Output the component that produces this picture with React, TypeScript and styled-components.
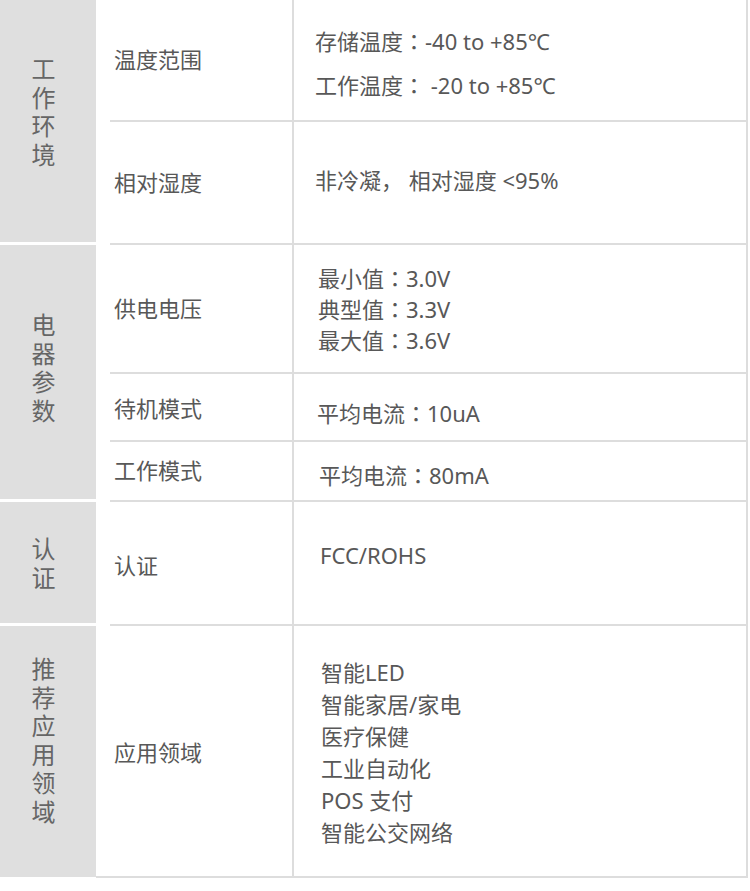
import React from "react";
import styled, { createGlobalStyle } from "styled-components";

const Global = createGlobalStyle`
  html, body { margin: 0; padding: 0; background: #ffffff; }
  body { font-family: "Noto Sans", "Noto Sans CJK SC", sans-serif; }
`;

const LINE = "#dddddd";

const Table = styled.div`
  width: 748px;
  display: flex;
  flex-direction: column;
  color: #585858;
`;

const Group = styled.div`
  display: flex;
  align-items: stretch;
`;

const GroupTitle = styled.div<{ $lift: number; $last?: boolean }>`
  width: 96px;
  flex: none;
  box-sizing: border-box;
  background: #dfdfdf;
  border-bottom: ${(p) => (p.$last ? "1px" : "3px")} solid #ffffff;
  display: flex;
  align-items: center;
  justify-content: center;
  padding-right: 9px;
  padding-bottom: ${(p) => p.$lift}px;
`;

const TitleText = styled.div`
  width: 1em;
  font-family: "Noto Sans CJK SC", sans-serif;
  font-size: 24px;
  line-height: 28.5px;
  color: #666666;
  text-align: center;
  word-break: break-all;
`;

const Rows = styled.div`
  flex: 1;
  display: flex;
  flex-direction: column;
`;

const Row = styled.div<{ $h: number }>`
  height: ${(p) => p.$h}px;
  display: flex;
`;

const LabelCell = styled.div<{ $shift: number; $last?: boolean }>`
  width: ${(p) => (p.$last ? 196 : 182)}px;
  margin-left: ${(p) => (p.$last ? 0 : 14)}px;
  box-sizing: border-box;
  border-bottom: 2px solid ${LINE};
  display: flex;
  align-items: center;
  padding-left: ${(p) => (p.$last ? 18 : 4)}px;
  padding-top: ${(p) => Math.max(p.$shift, 0) * 2}px;
  padding-bottom: 4px;
  font-family: "Noto Sans CJK SC", sans-serif;
  font-size: 22px;
  color: #585858;
`;

const ValueCell = styled.div<{ $top: number; $indent: number }>`
  flex: 1;
  box-sizing: border-box;
  border-left: 2px solid ${LINE};
  border-right: 2px solid ${LINE};
  border-bottom: 2px solid ${LINE};
  padding-top: ${(p) => p.$top}px;
  padding-left: ${(p) => p.$indent}px;
  display: flex;
  flex-direction: column;
`;

const ValueLine = styled.div<{ $lh: number }>`
  font-size: 22px;
  line-height: ${(p) => p.$lh}px;
  white-space: pre;
  color: #585858;
`;

const Colon = styled.span`
  font-family: "Noto Sans CJK TC", sans-serif;
`;

type RowData = {
  label: string;
  h: number;
  shift: number;
  top: number;
  lh: number;
  indent: number;
  lines: string[];
};

type GroupData = { title: string; lift: number; rows: RowData[] };

const groups: GroupData[] = [
  {
    title: "工作环境",
    lift: 20,
    rows: [
      {
        label: "温度范围",
        h: 122,
        shift: 0,
        top: 19,
        lh: 43,
        indent: 21,
        lines: ["存储温度：-40 to +85℃", "工作温度： -20 to +85℃"],
      },
      {
        label: "相对湿度",
        h: 123,
        shift: 0,
        top: 43,
        lh: 30,
        indent: 21,
        lines: ["非冷凝， 相对湿度 <95%"],
      },
    ],
  },
  {
    title: "电器参数",
    lift: 10,
    rows: [
      {
        label: "供电电压",
        h: 129,
        shift: 0,
        top: 17,
        lh: 30,
        indent: 24,
        lines: ["最小值：3.0V", "典型值：3.3V", "最大值：3.6V"],
      },
      {
        label: "待机模式",
        h: 68,
        shift: 2,
        top: 23,
        lh: 30,
        indent: 23,
        lines: ["平均电流：10uA"],
      },
      {
        label: "工作模式",
        h: 60,
        shift: 0,
        top: 17,
        lh: 30,
        indent: 25,
        lines: ["平均电流：80mA"],
      },
    ],
  },
  {
    title: "认证",
    lift: 0,
    rows: [
      {
        label: "认证",
        h: 124,
        shift: 3,
        top: 38,
        lh: 30,
        indent: 26,
        lines: ["FCC/ROHS"],
      },
    ],
  },
  {
    title: "推荐应用领域",
    lift: 24,
    rows: [
      {
        label: "应用领域",
        h: 252,
        shift: 2,
        top: 30,
        lh: 32,
        indent: 27,
        lines: ["智能LED", "智能家居/家电", "医疗保健", "工业自动化", "POS 支付", "智能公交网络"],
      },
    ],
  },
];

function renderLine(text: string) {
  const parts = text.split("：");
  return parts.map((part, i) => (
    <React.Fragment key={i}>
      {i > 0 && <Colon>：</Colon>}
      {part}
    </React.Fragment>
  ));
}

export default function App() {
  return (
    <>
      <Global />
      <Table>
        {groups.map((g, gi) => {
          const lastGroup = gi === groups.length - 1;
          return (
            <Group key={g.title}>
              <GroupTitle $lift={g.lift} $last={lastGroup}>
                <TitleText>{g.title}</TitleText>
              </GroupTitle>
              <Rows>
                {g.rows.map((r) => (
                  <Row key={r.label} $h={r.h}>
                    <LabelCell $shift={r.shift} $last={lastGroup}>
                      {r.label}
                    </LabelCell>
                    <ValueCell $top={r.top} $indent={r.indent}>
                      {r.lines.map((l) => (
                        <ValueLine key={l} $lh={r.lh}>
                          {renderLine(l)}
                        </ValueLine>
                      ))}
                    </ValueCell>
                  </Row>
                ))}
              </Rows>
            </Group>
          );
        })}
      </Table>
    </>
  );
}
